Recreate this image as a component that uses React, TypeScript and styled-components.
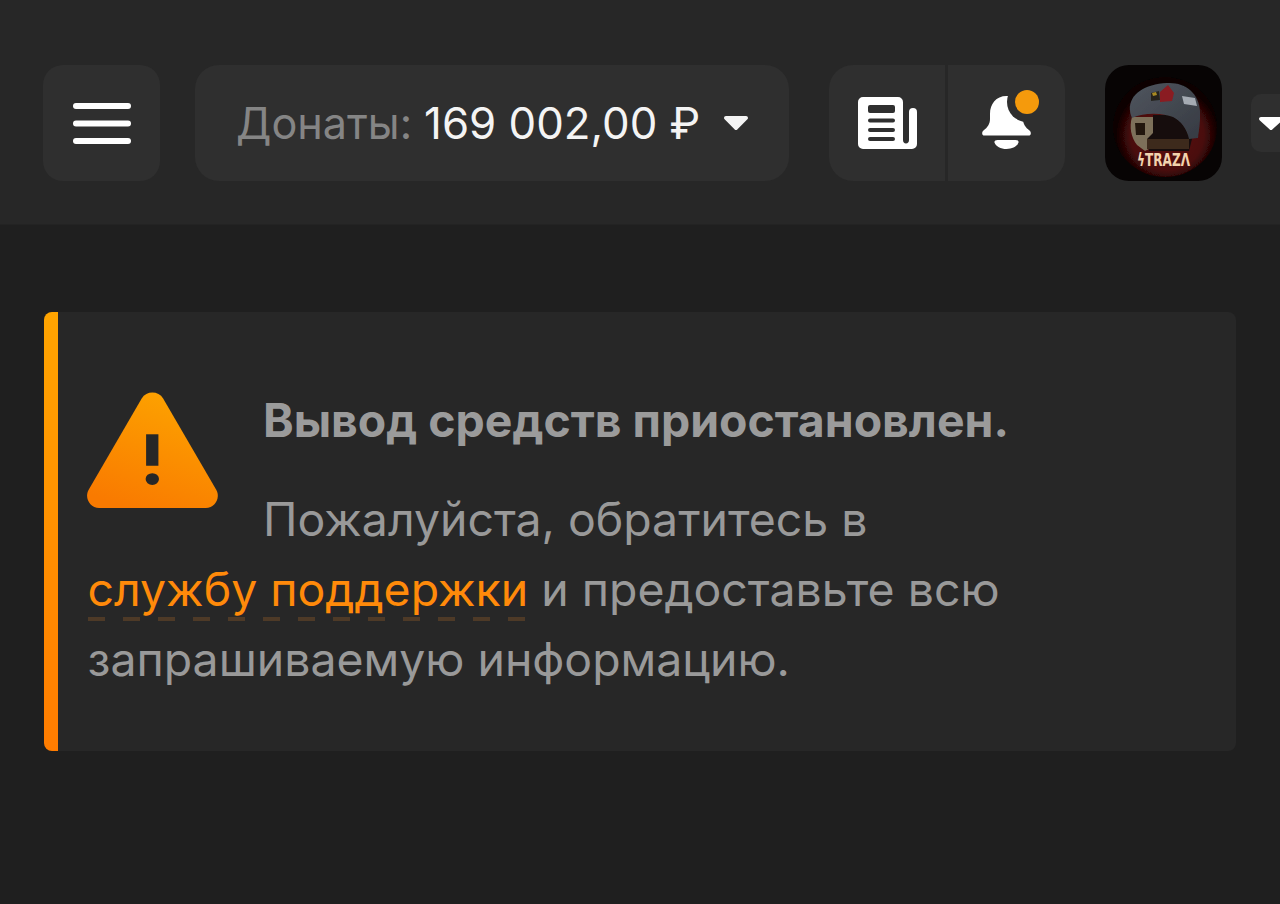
import React from 'react'
import styled, { createGlobalStyle } from 'styled-components'

const GlobalStyle = createGlobalStyle`
  html, body {
    margin: 0;
    padding: 0;
    height: 100%;
    background: #1f1f1f;
    overflow: hidden;
  }
  * {
    box-sizing: border-box;
  }
`

const Page = styled.div`
  width: 1280px;
  height: 904px;
  overflow: hidden;
  background: #1f1f1f;
  font-family: Inter, 'Liberation Sans', sans-serif;
  font-size: 46.4px;
`

const Header = styled.header`
  display: flex;
  align-items: flex-start;
  height: 225px;
  padding: 65px 0 0 43px;
  background: #272727;
  border-bottom: 1px solid #232323;
`

const Tile = styled.button`
  display: flex;
  align-items: center;
  justify-content: center;
  height: 116px;
  padding: 0;
  border: 0;
  background: #2f2f2f;
  color: #fff;
  font: inherit;
`

const MenuButton = styled(Tile)`
  flex: none;
  width: 117px;
  border-radius: 20px;
`

const DonateButton = styled(Tile)`
  flex: none;
  width: 594px;
  margin-left: 35px;
  padding-left: 41px;
  justify-content: flex-start;
  border-radius: 24px;
`

const DonateLabel = styled.span`
  color: #858585;
  margin-right: 12px;
  font-size: 43.2px;
`

const DonateValue = styled.span`
  color: #f4f4f4;
  font-size: 43.8px;
`

const Caret = styled.svg`
  display: block;
  flex: none;
  width: 24px;
  height: 14px;
  margin: 0 0 1px 24px;
`

const IconGroup = styled.div`
  display: flex;
  flex: none;
  gap: 3px;
  margin-left: 40px;
`

const GroupButton = styled(Tile)<{ $side: 'left' | 'right' }>`
  width: ${(props) => (props.$side === 'left' ? '116px' : '117px')};
  border-radius: ${(props) => (props.$side === 'left' ? '24px 0 0 24px' : '0 24px 24px 0')};
`

const BellSvg = styled.svg`
  display: block;
  margin: 0 0 6px 9px;
`

const Avatar = styled.svg`
  display: block;
  flex: none;
  width: 117px;
  height: 116px;
  margin-left: 40px;
  border-radius: 24px;
`

const ProfileCaret = styled.div`
  display: flex;
  align-items: center;
  flex: none;
  width: 60px;
  height: 58px;
  margin: 29px 0 0 29px;
  padding-left: 8px;
  border-radius: 10px;
  background: #2f2f2f;
`

const SmallCaret = styled.svg`
  display: block;
  width: 24px;
  height: 13px;
`

const Main = styled.main`
  padding: 87px 44px 0;
`

const Alert = styled.section`
  display: flex;
  width: 1192px;
  height: 439px;
  border-radius: 8px;
  background: #272727;
`

const AlertBar = styled.div`
  flex: none;
  width: 14px;
  border-radius: 8px 0 0 8px;
  background: linear-gradient(180deg, #ffa400 0%, #ff7c00 100%);
`

const AlertBody = styled.div`
  flex: 1;
  padding: 73px 30px 0 29.500px;
  line-height: 70px;
  color: #999999;
`

const WarningIcon = styled.svg`
  display: block;
  float: left;
  width: 131px;
  height: 118px;
  margin: 7px 45px 30px -0.5px;
`

const AlertTitle = styled.h2`
  margin: 0 0 28.500px;
  font-size: 46.4px;
  line-height: 70px;
  font-weight: 700;
  color: #9b9b9b;
`

const AlertText = styled.p`
  margin: 0;
  font-size: 46.4px;
`

const SupportLink = styled.a`
  color: #ff8a0a;
  white-space: nowrap;
  padding-bottom: 4px;
  background-image: linear-gradient(90deg, #4e3a27 50%, transparent 50%);
  background-size: 35px 4px;
  background-repeat: repeat-x;
  background-position: 0 100%;
`

const MenuIcon = () => (
  <svg width="58" height="41" viewBox="0 0 58 41" fill="#fff">
    <rect x="0" y="0" width="58" height="6" rx="3" />
    <rect x="0" y="17.5" width="58" height="6" rx="3" />
    <rect x="0" y="35" width="58" height="6" rx="3" />
  </svg>
)

const NewsIcon = () => (
  <svg width="59" height="52" viewBox="0 0 59 52">
    <path
      fill="#fff"
      fillRule="evenodd"
      d="M5 0H40a5 5 0 0 1 5 5V43c0 2 1.200 3.500 3 3.500s3-1.500 3-3.500V15a4 4 0 0 1 8 0V47a5 5 0 0 1-5 5H5a5 5 0 0 1-5-5V5a5 5 0 0 1 5-5ZM12 8a2 2 0 0 0-2 2v4a2 2 0 0 0 2 2H35a2 2 0 0 0 2-2v-4a2 2 0 0 0-2-2ZM12 21.500a2 2 0 0 0 0 4H35a2 2 0 0 0 0-4ZM12 31a2 2 0 0 0 0 4H35a2 2 0 0 0 0-4ZM12 40a2 2 0 0 0 0 4H35a2 2 0 0 0 0-4Z"
    />
  </svg>
)

const BellIcon = () => (
  <BellSvg width="58" height="60" viewBox="0 0 58 60">
    <defs>
      <mask id="bell-notch">
        <rect width="58" height="60" fill="#fff" />
        <circle cx="45" cy="12" r="20" fill="#000" />
      </mask>
    </defs>
    <g fill="#fff" mask="url(#bell-notch)">
      <path d="M24.500 6C14 6 8 14 8 24v5c0 5-2.500 8.500-6.500 11.500C-.5 42-.3 45.500 2.500 45.500h44c2.800 0 3-3.500 1-5-4-3-6.500-6.500-6.500-11.500v-5C41 14 35 6 24.500 6Z" />
    </g>
    <path fill="#fff" d="M15.500 50h18c2 0 3.500 1 3 2.500C35 56.500 30.500 59 24.500 59S14 56.500 12.500 52.500c-.5-1.500 1-2.500 3-2.500Z" />
    <circle cx="45" cy="12" r="12" fill="#f59a0c" />
  </BellSvg>
)

const AvatarArt = () => (
  <Avatar viewBox="0 0 117 116">
    <defs>
      <radialGradient id="glow" cx="52%" cy="58%" r="50%">
        <stop offset="0%" stopColor="#5e0c0c" />
        <stop offset="70%" stopColor="#4a0909" />
        <stop offset="100%" stopColor="#0a0303" />
      </radialGradient>
      <linearGradient id="helmet" x1="0" y1="0" x2="1" y2="1">
        <stop offset="0%" stopColor="#50565f" />
        <stop offset="100%" stopColor="#363a42" />
      </linearGradient>
      <filter id="soft">
        <feGaussianBlur stdDeviation="0.6" />
      </filter>
    </defs>
    <rect width="117" height="116" fill="#070404" />
    <g filter="url(#soft)">
      <ellipse cx="60" cy="62" rx="52" ry="50" fill="url(#glow)" />
      <path d="M27 52h30v30H48l-8 4-8-6c-6-8-8-18-5-28Z" fill="#7d705a" />
      <path d="M30 58h10v12h-9Z" fill="#241810" />
      <path d="M48 50h36l3 24-3 12H44l-2-12 6-6Z" fill="#170c08" />
      <path d="M42 74h42v10H42Z" fill="#3c2a1b" />
      <path
        d="M25 45C24 29 40 19 62 18c18-1 32 10 33 28 .5 10-1 20-2 27l-9 1C82 64 76 56 68 52c-10-4-28-5-41 1-1-2-2-5-2-8Z"
        fill="url(#helmet)"
      />
      <path d="M55 27l8-7 6 8-2 8-12 1Z" fill="#8a1c20" />
      <path d="M46 28l8-2 1 9-9 1Z" fill="#25241f" />
      <path d="M47 28l4-1 1 3-4 1Z" fill="#a88a22" />
      <path d="M77 31l13 2 2 8-13-2Z" fill="#a5abb3" />
    </g>
    <text
      x="58.500"
      y="101"
      textAnchor="middle"
      fill="#f2d3ae"
      fontFamily="'DejaVu Sans', sans-serif"
      fontSize="17"
      fontWeight="700"
      textLength="53"
      lengthAdjust="spacingAndGlyphs"
    >
      ϟTRAZΛ
    </text>
  </Avatar>
)

const App: React.FC = () => {
  return (
    <Page>
      <GlobalStyle />
      <Header>
        <MenuButton>
          <MenuIcon />
        </MenuButton>
        <DonateButton>
          <DonateLabel>Донаты:</DonateLabel>
          <DonateValue>169 002,00 ₽</DonateValue>
          <Caret viewBox="0 0 24 14">
            <path d="M2 0h20c1.800 0 2.600 2 1.400 3.300L13.500 13.300a2 2 0 0 1-3 0L.6 3.300C-.6 2 .2 0 2 0Z" fill="#f4f4f4" />
          </Caret>
        </DonateButton>
        <IconGroup>
          <GroupButton $side="left">
            <NewsIcon />
          </GroupButton>
          <GroupButton $side="right">
            <BellIcon />
          </GroupButton>
        </IconGroup>
        <AvatarArt />
        <ProfileCaret>
          <SmallCaret viewBox="0 0 24 13">
            <path d="M2 0h20c1.800 0 2.600 2 1.400 3.200L13.500 12.300a2 2 0 0 1-3 0L.6 3.200C-.6 2 .2 0 2 0Z" fill="#fff" />
          </SmallCaret>
        </ProfileCaret>
      </Header>
      <Main>
        <Alert>
          <AlertBar />
          <AlertBody>
            <WarningIcon viewBox="0 0 133 120">
              <defs>
                <linearGradient id="warn" x1="0.7" y1="0" x2="0.3" y2="1">
                  <stop offset="0%" stopColor="#fda300" />
                  <stop offset="100%" stopColor="#f97a00" />
                </linearGradient>
              </defs>
              <path
                fill="url(#warn)"
                d="M55.500 6.500c4.800-8 17-8 21.800 0l54 93c4.600 8-1 18.500-10.700 18.500H12.300C2.600 118-3 107.500 1.600 99.500l53.900-93Z"
              />
              <rect x="60" y="43" width="12.500" height="32" fill="#272727" />
              <ellipse cx="66.300" cy="88.500" rx="6.800" ry="6" fill="#272727" />
            </WarningIcon>
            <AlertTitle>Вывод средств приостановлен.</AlertTitle>
            <AlertText>
              Пожалуйста, обратитесь в <SupportLink>службу поддержки</SupportLink> и предоставьте всю запрашиваемую
              информацию.
            </AlertText>
          </AlertBody>
        </Alert>
      </Main>
    </Page>
  )
}

export default App
